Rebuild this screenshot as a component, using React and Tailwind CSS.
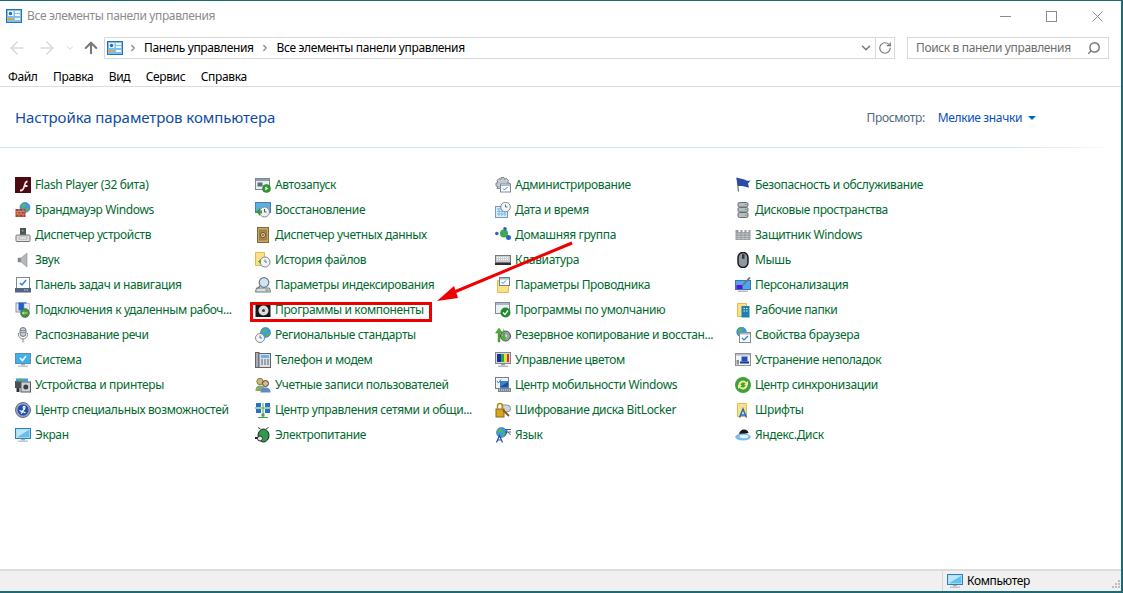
import { ChevronDown, ChevronRight, ArrowLeft, ArrowRight, ArrowUp, RotateCw, Search } from 'lucide-react';

const Monitor = ({ screen = '#5cb8ec' }) => (
  <>
    <rect x="0.500" y="1.500" width="15" height="10" fill={screen} stroke="#5f8fb0" />
    <rect x="6" y="12" width="4" height="1.500" fill="#a8b0b8" />
    <rect x="3" y="13.500" width="10" height="1.500" fill="#c2c8ce" />
  </>
);

const Globe = ({ cx = 9, cy = 6, r = 5 }) => (
  <>
    <circle cx={cx} cy={cy} r={r} fill="#3f9be0" stroke="#2a6fb0" strokeWidth="0.600" />
    <path d={`M${cx - 3} ${cy - 3}q3 -1 4 1q-1 2 -3 2q-2 0 -1 -3z`} fill="#5fb83c" />
    <path d={`M${cx + 1} ${cy + 1}q3 -1 3 1q-1 2 -3 2z`} fill="#5fb83c" />
  </>
);

const Clock = ({ cx = 11, cy = 11, r = 4 }) => (
  <>
    <circle cx={cx} cy={cy} r={r} fill="#f2f4f5" stroke="#7f8a90" />
    <path d={`M${cx} ${cy - 2.500}V${cy}H${cx + 2}`} fill="none" stroke="#50585e" strokeWidth="0.800" />
  </>
);

const Folder = () => <path d="M2.500 1.500h9v13h-9z" fill="#fbe08c" stroke="#e0bc50" />;

const icons = {
  flash: (<><rect width="16" height="16" fill="#4d0a10" /><path d="M5 12.500c3 0 3-2 4-5s1.500-4 3.500-4v2c-1.200 0-1.500 1-2 2.500h2v2H10c-1 2.500-2 4.500-5 4.500z" fill="#f5eeee" /></>),
  firewall: (<><Globe cx={10} cy={5.500} r={5} /><rect x="0.500" y="7" width="10" height="8" fill="#a8452c" /><path d="M0.500 9.500h10M0.500 12h10M4 7v2.500M8 7v2.500M2.500 9.500V12M6 9.500V12M4 12v3M8 12v3" stroke="#e0b09c" strokeWidth="0.600" fill="none" /></>),
  devmgr: (<><rect x="5" y="1" width="6" height="7" fill="#50565c" /><rect x="7" y="3" width="1.500" height="1.500" fill="#4fd04f" /><rect x="1" y="8" width="14" height="6.500" rx="1" fill="#dfe2e5" stroke="#777" /><rect x="4" y="10" width="8" height="2" fill="#fff" stroke="#777" strokeWidth="0.500" /></>),
  sound: (<><path d="M3 6h3l6-5v14l-6-5H3z" fill="#b4b8bc" stroke="#8c9094" strokeWidth="0.600" /><rect x="3" y="6" width="3" height="4" fill="#888" /></>),
  taskbar: (<><rect x="1.500" y="0.500" width="13" height="11" fill="#fff" stroke="#7a8a9a" /><path d="M5 6l2 2 4-5" fill="none" stroke="#2a80e0" strokeWidth="1.500" /><rect x="0" y="11" width="16" height="4.500" fill="#4f6580" /><path d="M9 13h1.500M11.500 13H13" stroke="#cdd8e0" /></>),
  rdp: (<><rect x="1" y="1" width="10" height="9" fill="#e6eaf0" stroke="#8a95a0" /><rect x="3.500" y="0.500" width="8" height="8" fill="#1f5fd0" /><rect x="9" y="1.500" width="5.500" height="7" fill="#e9eef4" stroke="#8a95a0" strokeWidth="0.500" /><circle cx="10" cy="11" r="4.500" fill="#48923c" stroke="#2e6a2a" strokeWidth="0.500" /><path d="M7.500 11h5M9 9.500l-1.500 1.500 1.500 1.500" stroke="#fff" fill="none" strokeWidth="0.700" /></>),
  speech: (<><rect x="5" y="0.500" width="6" height="9" rx="3" fill="#c6cbd0" stroke="#757b82" /><path d="M5 3.500h6M5 5.500h6" stroke="#757b82" strokeWidth="0.700" /><path d="M3.500 6v1.500a4.500 4.500 0 009 0V6M8 12v3.500" fill="none" stroke="#80868c" /></>),
  system: (<><Monitor screen="#3fb0ea" /><path d="M5 6l2.500 2.500L11 4" fill="none" stroke="#fff" strokeWidth="1.500" /></>),
  devices: (<><rect x="0" y="4" width="7" height="7" fill="#4a4f55" /><path d="M1 1.500h12v3H1z" fill="#3f9be0" /><path d="M4 1.500h3v3H4z" fill="#5fb83c" /><rect x="6" y="5" width="9.500" height="10" fill="#d0d4d8" stroke="#53595f" /><circle cx="10.800" cy="10" r="2.500" fill="#3a3f44" /><rect x="1.500" y="11" width="3" height="4" fill="#2e3237" /></>),
  access: (<><circle cx="8" cy="8" r="7.500" fill="#9aa3bb" stroke="#62708c" /><circle cx="8" cy="8" r="5.500" fill="#1f4fa8" /><path d="M4.500 8.500l2.500 1 3-3M8 5.500a1 1 0 100-.1M6 11.500l2-2 2.500 1.500" fill="none" stroke="#fff" strokeWidth="1.200" /></>),
  screen: (<><rect x="0.500" y="1.500" width="15" height="10" fill="#d4effa" stroke="#2f7fb0" /><rect x="1.500" y="2.500" width="13" height="8" fill="#64c0ec" /><path d="M1.500 10.500V2.500h13z" fill="#bfe6f7" /><rect x="6" y="12" width="4" height="1.500" fill="#a8b0b8" /><rect x="3" y="13.500" width="10" height="1.500" fill="#c2c8ce" /></>),

  autorun: (<><rect x="0.500" y="1.500" width="14" height="11" fill="#eceff1" stroke="#7c8890" /><rect x="1" y="2" width="13" height="2" fill="#8fa0ab" /><rect x="2.500" y="5.500" width="5" height="4" fill="#55707f" /><circle cx="11.500" cy="11.500" r="4" fill="#2c9a2c" stroke="#1d701d" strokeWidth="0.500" /><path d="M10.300 9.500l3 2-3 2z" fill="#fff" /></>),
  restore: (<><rect x="0.500" y="0.500" width="15" height="10" fill="#5cb0e8" stroke="#4a80a8" /><circle cx="9.500" cy="10" r="5" fill="#eef0f1" stroke="#80898f" /><path d="M9.500 7v3h2" fill="none" stroke="#555" /><path d="M1 9.500L5 6v2.500h2v3H5V14z" fill="#3f9a3c" /></>),
  credentials: (<><rect x="2.500" y="0.500" width="11" height="15" fill="#c9a464" stroke="#806a3a" /><rect x="4.500" y="3" width="7" height="10" fill="#a88748" stroke="#806a3a" strokeWidth="0.500" /><circle cx="8" cy="8" r="2.500" fill="#e9dcb8" stroke="#5e4c28" /><circle cx="8" cy="8" r="0.900" fill="#5e4c28" /></>),
  filehistory: (<><path d="M0.500 0.500h9v13h-9z" fill="#fbe08c" stroke="#e0bc50" /><Clock cx={10} cy={10} r={5} /><path d="M3 9.500l3-2.500v5z" fill="#53a83a" /></>),
  index: (<><circle cx="9" cy="5.500" r="4.800" fill="#cfe3f2" stroke="#6f7880" strokeWidth="1.200" /><path d="M1.500 11h13l1 4H0.500z" fill="#dadee2" stroke="#6f7880" /><rect x="10.500" y="12.500" width="3" height="1.200" fill="#45b045" /><path d="M5 9l-2.500 2.500" stroke="#6f7880" strokeWidth="1.500" /></>),
  programs: (<><rect x="0.500" y="2" width="15" height="13" fill="#14171a" /><rect x="1.500" y="0.500" width="13" height="2" fill="#b6b9bc" /><circle cx="8.500" cy="8.500" r="5" fill="#d9dcdf" /><circle cx="8.500" cy="8.500" r="1.500" fill="#3a3f44" /></>),
  regional: (<><Globe cx={10.500} cy={5.500} r={5} /><Clock cx={5} cy={11} r={4.500} /></>),
  phone: (<><rect x="0.500" y="0.500" width="3.500" height="15" fill="#a8aeb4" stroke="#5d646b" /><rect x="4" y="1.500" width="11.500" height="14" fill="#dde1e5" stroke="#5d646b" /><rect x="6" y="3" width="8" height="3" fill="#68b4e8" /><path d="M6 8h2M9 8h2M12 8h2M6 10h2M9 10h2M12 10h2M6 12h2M9 12h2M12 12h2" stroke="#59606a" /></>),
  users: (<><circle cx="5" cy="4.500" r="3.200" fill="#d4b37c" stroke="#6f8a4a" /><path d="M0.500 14c0-4 2-5.500 4.500-5.500s4 1 5 3v2.500z" fill="#88a868" /><circle cx="10.500" cy="6.500" r="3" fill="#d9b88c" stroke="#4f4030" /><path d="M5.500 15.500c0-3.500 2-5 5-5s5 1.500 5 5z" fill="#5e8cc0" /></>),
  network: (<><rect x="1" y="1" width="5" height="4" fill="#2a70c8" /><rect x="10" y="1" width="5" height="4" fill="#2a70c8" /><rect x="1" y="7" width="5" height="4" fill="#2a70c8" /><rect x="10" y="7" width="5" height="4" fill="#2a70c8" /><path d="M0 6h16M8 1v14M3 15.500h10" stroke="#48a048" fill="none" /><rect x="6.500" y="11.500" width="3" height="3" fill="#48a048" /></>),
  power: (<><ellipse cx="8.500" cy="8.500" rx="5.500" ry="6.500" fill="#2f9a4c" stroke="#222" /><path d="M5.500 2L3 0.500M11 2l2.500-1.500" stroke="#444" /><path d="M0 11h4" stroke="#222" strokeWidth="2" /><circle cx="5" cy="11.500" r="2.500" fill="#e8eaec" stroke="#333" /></>),

  admin: (<><path d="M6 0.500h3l.5 2 2-1 2 2-1 2 2 .5v3l-2 .5 1 2H2l1-2-2-.5v-3l2-.5-1-2 2-2 2 1z" fill="#c4cace" stroke="#7f888e" /><rect x="5.500" y="7" width="10" height="8" fill="#fff" stroke="#7f8a96" /><rect x="6" y="7.500" width="9" height="1.500" fill="#a9b9c8" /><path d="M8 11.500l1.500 1.500 3-3" fill="none" stroke="#2a80e0" /></>),
  datetime: (<><rect x="0.500" y="4.500" width="12" height="11" fill="#d8ecfa" stroke="#7f98b0" /><path d="M2 7h9M2 9.500h9M2 12h9M4 6v8M7 6v8M10 6v8" stroke="#68b4e8" strokeWidth="0.800" /><Clock cx={10.500} cy={5} r={4.800} /></>),
  homegroup: (<><circle cx="1.800" cy="6.500" r="1.800" fill="#2a66b8" /><circle cx="9" cy="6.500" r="4" fill="#3ea84a" /><circle cx="10" cy="1.800" r="1.800" fill="#2a66b8" /><circle cx="13.500" cy="10.500" r="2.500" fill="#2a66b8" /></>),
  keyboard: (<><rect x="0.500" y="3.500" width="15" height="7" fill="#c8ccd0" stroke="#777" /><path d="M2 5.500h12M2 7.500h12" stroke="#fff" strokeDasharray="1 1" /><rect x="0" y="11" width="16" height="2" fill="#2c2f33" /></>),
  explorer: (<><path d="M2.500 3.500h11v12h-11z" fill="#fbe08c" stroke="#e0bc50" /><rect x="4.500" y="0.500" width="10" height="8" fill="#fff" stroke="#6f7e8e" /><rect x="5" y="1" width="9" height="1.500" fill="#a9b9c8" /><path d="M6.500 5l1.500 1.500 3-3" fill="none" stroke="#2a80e0" /></>),
  defaults: (<><rect x="0.500" y="0.500" width="14" height="11" fill="#eef1f4" stroke="#7f8a96" /><rect x="1" y="1" width="13" height="2" fill="#a9b9c8" /><circle cx="10.500" cy="10.500" r="5" fill="#1f8a2f" /><path d="M8 10.500l2 2 3-4" fill="none" stroke="#fff" strokeWidth="1.300" /></>),
  backup: (<><circle cx="10.500" cy="9" r="5" fill="#9aa0a6" stroke="#45494e" /><circle cx="10.500" cy="9" r="1.500" fill="#e8eaec" /><path d="M3 15V6H0.500L4 1l3.500 5H5v9z" fill="#4cb034" stroke="#2f7a24" strokeWidth="0.400" /><path d="M8 1v8H6l3 5 2-3" fill="#4cb034" /></>),
  color: (<><rect x="0.500" y="0.500" width="15" height="11" fill="#d6d9dc" stroke="#7f858b" /><rect x="2" y="2" width="4" height="8" fill="#1f2f9a" /><rect x="6" y="2" width="3" height="8" fill="#22a84a" /><rect x="9" y="2" width="3" height="8" fill="#e8e030" /><rect x="12" y="2" width="2" height="8" fill="#d83030" /><rect x="6" y="12" width="4" height="1.500" fill="#9aa0a6" /><rect x="3" y="13.500" width="10" height="1.500" fill="#b8bcc0" /></>),
  mobility: (<><rect x="0.500" y="0.500" width="13" height="11" fill="#f0f2f4" stroke="#6f7e8e" /><path d="M2 4l1.500 2L6 2.500" fill="none" stroke="#2a80e0" /><rect x="5" y="4" width="8" height="7" fill="#3f80c8" /><path d="M5 10l8-5v5z" fill="#1f4f9a" /><rect x="3" y="11" width="13" height="4" fill="#7d8690" /><path d="M4 13h11" stroke="#e4e8ec" strokeDasharray="1 1" /></>),
  bitlocker: (<><path d="M7 3h5a3.500 3.500 0 010 7H7z" fill="#d3d6d9" stroke="#8a8f94" /><rect x="1" y="7" width="8" height="8" fill="#d9a520" stroke="#8a6a1a" /><path d="M2.500 7V4a2.500 2.500 0 015 0v3" fill="none" stroke="#b88a1c" strokeWidth="1.500" /><path d="M8 8l6 6" stroke="#806020" strokeWidth="2" /></>),
  language: (<><Globe cx={6.500} cy={5.500} r={5} /><path d="M10 2.500h6M10 5h6M12 2.500c0 3-1 5-2.500 6M13 5l2.500 3" stroke="#1d3a70" strokeWidth="0.800" fill="none" /><path d="M1.500 15.500l3-7 3 7M3 13h3" fill="none" stroke="#1f4fa8" strokeWidth="1.200" /></>),

  security: (<><path d="M2 1l1.500 13.500" stroke="#6a7078" strokeWidth="1.200" /><path d="M1.500 0.500c4 1.500 6 1 9 2.500s3 .5 5 .5l-2.500 3 1 4c-3 0-5-2-9-1.500L3 9z" fill="#2a4aa8" /></>),
  storage: (<><rect x="3" y="0.500" width="10" height="4.500" rx="1.500" fill="#b6bcc2" stroke="#686e74" /><rect x="3" y="5.500" width="10" height="4.500" rx="1.500" fill="#b6bcc2" stroke="#686e74" /><rect x="3" y="10.500" width="10" height="5" rx="1.500" fill="#b6bcc2" stroke="#686e74" /><path d="M10 2.500h1.500M10 7.500h1.500M10 13h1.500" stroke="#40b040" /></>),
  defender: (<><path d="M0.500 3h3v2h2V3h2v2h2V3h2v2h2V3h2v10H0.500z" fill="#959a9e" /><path d="M0.500 7h15M0.500 9.500h15M0.500 11.500h15M4 5v8M8 5v8M12 5v8" stroke="#cfd2d4" strokeWidth="0.600" /></>),
  mouse: (<><rect x="3" y="0.500" width="10" height="15" rx="5" fill="#8f98a0" stroke="#191c1f" strokeWidth="1.500" /><rect x="7" y="2" width="2.500" height="5" rx="1.200" fill="#34393e" /></>),
  personal: (<><rect x="0.500" y="3.500" width="15" height="9" fill="#4fa8e8" stroke="#3878a8" /><rect x="1.500" y="8" width="6" height="4" fill="#5a10e0" /><path d="M8 8l7-7.500" stroke="#6a7480" strokeWidth="1.800" /><rect x="3" y="13.500" width="10" height="1.500" fill="#b8bcc0" /></>),
  workfolders: (<><Folder /><rect x="6.500" y="4" width="8" height="11.500" fill="#1f80b0" /><path d="M8.500 6.500h1.500M11 6.500h1.500M8.500 9h1.500M11 9h1.500" stroke="#d0eef8" strokeWidth="1.200" /></>),
  browser: (<><Globe cx={6.500} cy={5} r={4.800} /><rect x="4.500" y="5.500" width="11" height="10" fill="#fff" stroke="#7f8a96" /><rect x="5" y="6" width="10" height="1.500" fill="#a9b9c8" /><path d="M7 11l2 2 4-4" fill="none" stroke="#2a80e0" strokeWidth="1.200" /></>),
  trouble: (<><rect x="0.500" y="1.500" width="15" height="12" fill="#f2f3f4" stroke="#8a9099" /><rect x="1" y="2" width="14" height="1.500" fill="#b3bcc4" /><rect x="6.500" y="4.500" width="6" height="5" fill="#1f50c8" /><rect x="5" y="9.500" width="9" height="2" fill="#1c3a80" /><rect x="1.500" y="8" width="2.500" height="4.500" fill="#8a9099" /></>),
  sync: (<><circle cx="8" cy="8" r="8" fill="#3fa040" /><path d="M3.500 8a4.500 4.500 0 018-2.800L13 4v4H9l1.500-1.500A2.800 2.800 0 005.500 8z" fill="#f3ee90" /><path d="M12.500 8a4.500 4.500 0 01-8 2.800L3 12V8h4l-1.500 1.500A2.800 2.800 0 0010.500 8z" fill="#f3ee90" /></>),
  fonts: (<><Folder /><path d="M4.500 15.500l3.500-8.500 3.500 8.500M6 13h4" fill="none" stroke="#1f6fc8" strokeWidth="1.500" /></>),
  yandex: (<><path d="M4 8c0-3 2-5.500 5-5.500 2.500 0 4 1.500 4.500 3.500z" fill="#14161a" /><ellipse cx="8" cy="10" rx="7.800" ry="3.500" fill="#7cbcec" /><ellipse cx="9" cy="9.500" rx="4.500" ry="1.800" fill="#e4f2fc" /></>),
};

const columns = [
  [
    ['flash', 'Flash Player (32 бита)'],
    ['firewall', 'Брандмауэр Windows'],
    ['devmgr', 'Диспетчер устройств'],
    ['sound', 'Звук'],
    ['taskbar', 'Панель задач и навигация'],
    ['rdp', 'Подключения к удаленным рабоч...'],
    ['speech', 'Распознавание речи'],
    ['system', 'Система'],
    ['devices', 'Устройства и принтеры'],
    ['access', 'Центр специальных возможностей'],
    ['screen', 'Экран'],
  ],
  [
    ['autorun', 'Автозапуск'],
    ['restore', 'Восстановление'],
    ['credentials', 'Диспетчер учетных данных'],
    ['filehistory', 'История файлов'],
    ['index', 'Параметры индексирования'],
    ['programs', 'Программы и компоненты'],
    ['regional', 'Региональные стандарты'],
    ['phone', 'Телефон и модем'],
    ['users', 'Учетные записи пользователей'],
    ['network', 'Центр управления сетями и общи...'],
    ['power', 'Электропитание'],
  ],
  [
    ['admin', 'Администрирование'],
    ['datetime', 'Дата и время'],
    ['homegroup', 'Домашняя группа'],
    ['keyboard', 'Клавиатура'],
    ['explorer', 'Параметры Проводника'],
    ['defaults', 'Программы по умолчанию'],
    ['backup', 'Резервное копирование и восстан...'],
    ['color', 'Управление цветом'],
    ['mobility', 'Центр мобильности Windows'],
    ['bitlocker', 'Шифрование диска BitLocker'],
    ['language', 'Язык'],
  ],
  [
    ['security', 'Безопасность и обслуживание'],
    ['storage', 'Дисковые пространства'],
    ['defender', 'Защитник Windows'],
    ['mouse', 'Мышь'],
    ['personal', 'Персонализация'],
    ['workfolders', 'Рабочие папки'],
    ['browser', 'Свойства браузера'],
    ['trouble', 'Устранение неполадок'],
    ['sync', 'Центр синхронизации'],
    ['fonts', 'Шрифты'],
    ['yandex', 'Яндекс.Диск'],
  ],
];

const menu = ['Файл', 'Правка', 'Вид', 'Сервис', 'Справка'];

function PanelIcon() {
  return (
    <svg width="16" height="16" viewBox="0 0 16 16" className="shrink-0">
      <rect x="0.500" y="1.500" width="15" height="13" fill="#7cc0ee" stroke="#2f70a8" />
      <rect x="2" y="3" width="5.500" height="5" fill="#f4f8fb" />
      <circle cx="4.500" cy="5.500" r="1.800" fill="#2a70c0" />
      <rect x="9" y="3" width="5" height="2" fill="#f4f8fb" />
      <rect x="9" y="6" width="5" height="2" fill="#f4f8fb" />
      <rect x="2" y="10" width="5" height="2" fill="#f0a030" />
      <rect x="9" y="10" width="5" height="2" fill="#f4f8fb" />
    </svg>
  );
}

function Item({ icon, label }) {
  return (
    <div className="flex h-[25px] items-center gap-1">
      <svg width="16" height="16" viewBox="0 0 16 16" className="shrink-0">{icons[icon]}</svg>
      <span className="whitespace-nowrap text-[12px] tracking-[-0.36px] text-[#006a2e]">{label}</span>
    </div>
  );
}

export default function App() {
  return (
    <div className="relative flex h-[593px] w-[1123px] flex-col overflow-hidden border-t border-r-2 border-b-2 border-[#1d6a74] bg-white font-['Noto_Sans','Open_Sans',sans-serif] text-[12px]">
      {/* title bar */}
      <div className="flex h-[30px] shrink-0 items-center pl-[6px]">
        <PanelIcon />
        <span className="ml-[5px] tracking-[-0.36px] text-[#8c8c8c]">Все элементы панели управления</span>
        <div className="ml-auto flex items-center gap-[35px] pr-[18px]">
          <svg width="11" height="11" viewBox="0 0 11 11"><path d="M0 5.500h11" stroke="#8c8c8c" /></svg>
          <svg width="11" height="11" viewBox="0 0 11 11"><rect x="0.500" y="0.500" width="10" height="10" fill="none" stroke="#8c8c8c" /></svg>
          <svg width="11" height="11" viewBox="0 0 11 11"><path d="M0.500 0.500l10 10M10.500 0.500l-10 10" stroke="#8c8c8c" /></svg>
        </div>
      </div>

      {/* nav */}
      <div className="flex h-[28px] shrink-0 items-center pl-[7px] pt-[6px]">
        <ArrowLeft size={20} strokeWidth={2} className="text-[#dcdcdc]" />
        <ArrowRight size={20} strokeWidth={2} className="ml-[10px] text-[#dcdcdc]" />
        <ChevronDown size={10} strokeWidth={2.500} className="ml-[8px] text-[#dcdcdc]" />
        <ArrowUp size={18} strokeWidth={2.800} className="ml-[7px] mr-[1px] text-[#777]" />
        <div className="ml-[3px] flex h-[22px] w-[791px] items-center border border-[#d9d9d9] pl-[2px]">
          <PanelIcon />
          <ChevronRight size={10} strokeWidth={3} className="ml-[5px] text-[#888]" />
          <span className="ml-[6px] tracking-[-0.36px] text-black">Панель управления</span>
          <ChevronRight size={10} strokeWidth={3} className="ml-[6px] text-[#888]" />
          <span className="ml-[7px] tracking-[-0.36px] text-black">Все элементы панели управления</span>
          <ChevronDown size={14} strokeWidth={2.500} className="ml-auto mr-[2px] text-[#777]" />
          <div className="flex h-full w-[19px] items-center justify-center border-l border-[#d9d9d9]">
            <RotateCw size={14} strokeWidth={2} className="text-[#777]" />
          </div>
        </div>
        <div className="ml-[12px] flex h-[22px] w-[202px] items-center justify-between border border-[#d9d9d9] pl-[8px] pr-[7px]">
          <span className="tracking-[-0.36px] text-[#6d6d6d]">Поиск в панели управления</span>
          <Search size={14} strokeWidth={2.500} className="-scale-x-100 text-[#777]" />
        </div>
      </div>

      {/* menu */}
      <div className="flex h-[28px] shrink-0 items-center gap-[15.500px] border-b border-[#dcdcdc] pl-[8px] pt-[9px] text-black">
        {menu.map((m) => (
          <span key={m} className="tracking-[-0.36px]">{m}</span>
        ))}
      </div>

      {/* content */}
      <div className="min-h-0 flex-1">
        <div className="flex h-[60px] items-center pl-[15px] pr-[85px] pt-[1px]">
          <span className="text-[15px] tracking-[-0.08px] text-[#0f4ca3]">Настройка параметров компьютера</span>
          <span className="ml-auto tracking-[-0.36px] text-[#4a6a80]">Просмотр:</span>
          <span className="ml-[13px] tracking-[-0.36px] text-[#0a4fc0]">Мелкие значки</span>
          <span className="ml-[6px] h-0 w-0 border-x-[4px] border-t-[4px] border-x-transparent border-t-[#0066cc]" />
        </div>
        <div className="h-px bg-gradient-to-r from-[#cfe0ee] via-[#cfe0ee] via-90% to-white" />
        <div className="grid grid-cols-[240px_240px_240px_240px] pl-[15px] pt-[24px]">
          {columns.map((col, i) => (
            <div key={i} className="flex flex-col">
              {col.map(([icon, label]) => (
                <Item key={label} icon={icon} label={label} />
              ))}
            </div>
          ))}
        </div>
      </div>

      {/* status bar */}
      <div className="flex h-[22px] shrink-0 items-center border-t-2 border-[#dcdcdc] bg-[#f0f0f0]">
        <div className="ml-[942px] flex h-full items-center gap-[4px] border-l border-[#d5d5d5] pl-[4px]">
          <svg width="16" height="16" viewBox="0 0 16 16">{icons.screen}</svg>
          <span className="tracking-[-0.36px] text-black">Компьютер</span>
        </div>
        <svg width="9" height="9" viewBox="0 0 9 9" className="ml-auto mt-[6px]">
          <path d="M6 0h2v2H6zM3 3h2v2H3zM6 3h2v2H6zM0 6h2v2H0zM3 6h2v2H3zM6 6h2v2H6z" fill="#bdbdbd" />
        </svg>
      </div>

      {/* annotation over the list */}
      <div className="absolute left-[250px] top-[301px] h-[20px] w-[182px] border-[3px] border-[#ee0000]" />
      <svg className="absolute left-0 top-0" width="1123" height="593" viewBox="0 0 1123 593" style={{ pointerEvents: 'none' }}>
        <path d="M572 242L452 292" stroke="#ee0000" strokeWidth="3" fill="none" />
        <path d="M437 300L454 285L458 297z" fill="#ee0000" />
      </svg>
    </div>
  );
}
